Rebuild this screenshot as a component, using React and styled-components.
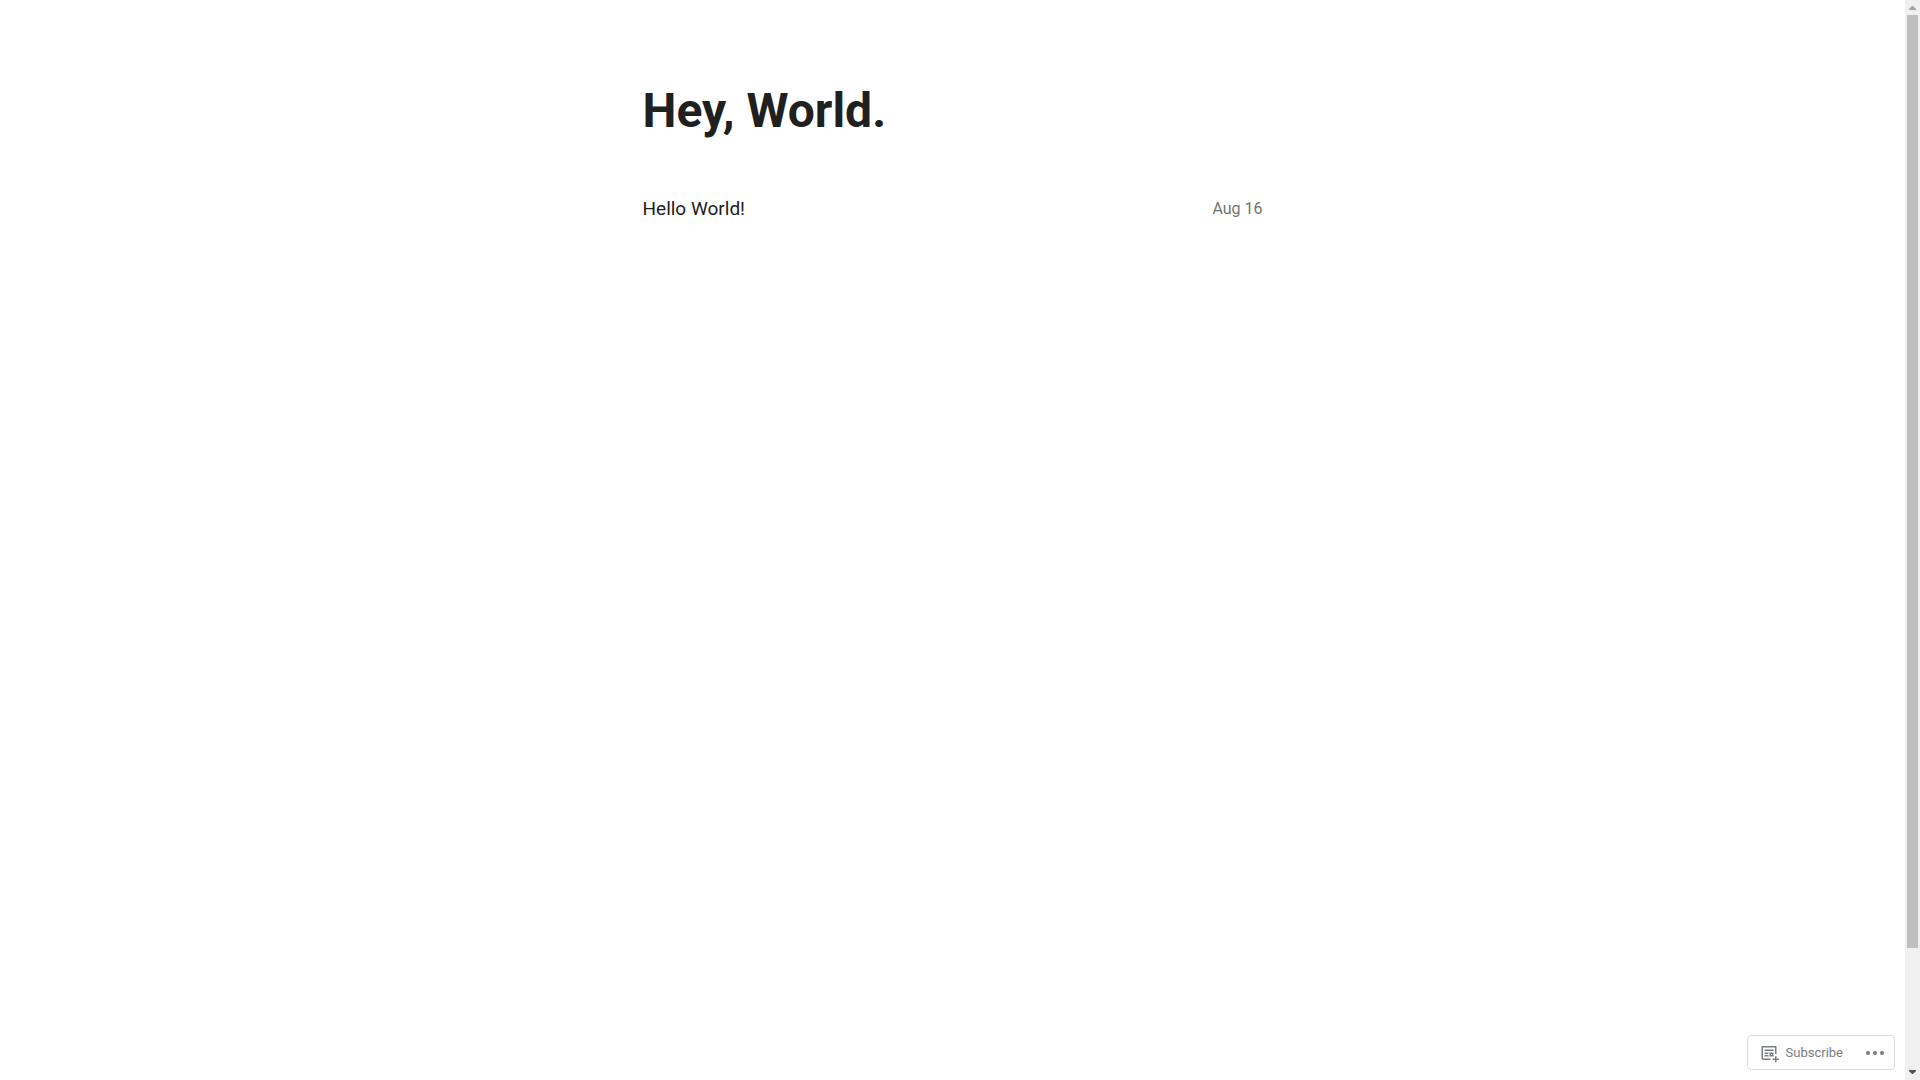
import React from "react";
import styled, { createGlobalStyle } from "styled-components";

const GlobalStyle = createGlobalStyle`
  *, *::before, *::after { box-sizing: border-box; }
  body {
    margin: 0;
    background: #fff;
    color: #20201e;
    font-family: Roboto, "Liberation Sans", sans-serif;
  }
`;

const Page = styled.div`
  display: flex;
  min-height: 100vh;
`;

const Content = styled.div`
  flex: 1;
  padding: 81px 24px 0;
`;

const Column = styled.div`
  max-width: 620px;
  margin: 0 auto;
`;

const SiteTitle = styled.h1`
  margin: 0 0 48px;
  font-size: 48px;
  line-height: 60px;
  font-weight: 700;
`;

const PlainLink = styled.a`
  color: inherit;
  text-decoration: none;
`;

const PostRow = styled.article`
  display: flex;
  align-items: center;
  justify-content: space-between;
  line-height: 40px;
`;

const PostTitle = styled.h2`
  margin: 0;
  font-size: 19px;
  font-weight: 400;
`;

const PostDate = styled.time`
  font-size: 16px;
  color: #74746c;
`;

const ActionBar = styled.div`
  position: fixed;
  right: 25px;
  bottom: 10px;
  display: flex;
  align-items: center;
  gap: 20px;
  height: 35px;
  padding: 0 7px 0 11px;
  background: #fff;
  border: 1px solid #dcdcde;
  border-radius: 4px;
`;

const ActionButton = styled.button`
  display: flex;
  align-items: center;
  gap: 7px;
  padding: 0;
  border: 0;
  background: none;
  color: #787c82;
  fill: currentColor;
  font: 400 13px/20px Roboto, "Liberation Sans", sans-serif;
  cursor: pointer;
`;

const Scrollbar = styled.div`
  position: sticky;
  top: 0;
  display: flex;
  flex-direction: column;
  width: 15px;
  height: 100vh;
  background: #f0f0f0;
`;

const ScrollArrow = styled.svg`
  flex: none;
  width: 15px;
  height: 15px;
  fill: ${(p) => p.$color};
`;

const Track = styled.div`
  flex: 1;
  padding: 0 2px;
`;

const Thumb = styled.div`
  height: ${(p) => p.$share}%;
  background: #bfbfbf;
`;

const VIEW_HEIGHT = 1080;
const SCROLL_HEIGHT = 1215;

const posts = [{ title: "Hello World!", date: "Aug 16" }];

export default function App() {
  return (
    <>
      <GlobalStyle />
      <Page>
        <Content>
          <Column>
            <header>
              <SiteTitle>
                <PlainLink href="#">Hey, World.</PlainLink>
              </SiteTitle>
            </header>
            <main>
              {posts.map((post) => (
                <PostRow key={post.title}>
                  <PostTitle>
                    <PlainLink href="#">{post.title}</PlainLink>
                  </PostTitle>
                  <PostDate>{post.date}</PostDate>
                </PostRow>
              ))}
            </main>
          </Column>
        </Content>
        <Scrollbar aria-hidden="true">
          <ScrollArrow viewBox="0 0 15 15" $color="#a3a3a3">
            <path d="M7 6h1l3 3v1H4V9z" />
          </ScrollArrow>
          <Track>
            <Thumb $share={(VIEW_HEIGHT / SCROLL_HEIGHT) * 100} />
          </Track>
          <ScrollArrow viewBox="0 0 15 15" $color="#505050">
            <path d="M4 5h7v1L8 9H7L4 6z" />
          </ScrollArrow>
        </Scrollbar>
      </Page>
      <ActionBar>
        <ActionButton type="button">
          <svg width="20" height="20" viewBox="0 0 20 20" aria-hidden="true">
            <path
              fillRule="evenodd"
              clipRule="evenodd"
              d="m4 4.5h12v6.5h1.5v-6.5-1.5h-1.5-12-1.5v1.5 10.5c0 1.10457.89543 2 2 2h7v-1.5h-7c-.27614 0-.5-.2239-.5-.5zm10.5 2h-9v1.5h9zm-5 3h-4v1.5h4zm3.5 1.5h-1v1h1zm-1-1.5h-1.5v1.5 1 1.5h1.5 1 1.5v-1.5-1-1.5h-1.5zm-2.5 2.5h-4v1.5h4zm6.5 1.25h1.5v2.25h2.25v1.5h-2.25v2.25h-1.5v-2.25h-2.25v-1.5h2.25z"
            />
          </svg>
          Subscribe
        </ActionButton>
        <ActionButton type="button" aria-label="More options">
          <svg width="24" height="24" viewBox="0 0 24 24" aria-hidden="true">
            <circle cx="5" cy="12" r="2" />
            <circle cx="12" cy="12" r="2" />
            <circle cx="19" cy="12" r="2" />
          </svg>
        </ActionButton>
      </ActionBar>
    </>
  );
}
